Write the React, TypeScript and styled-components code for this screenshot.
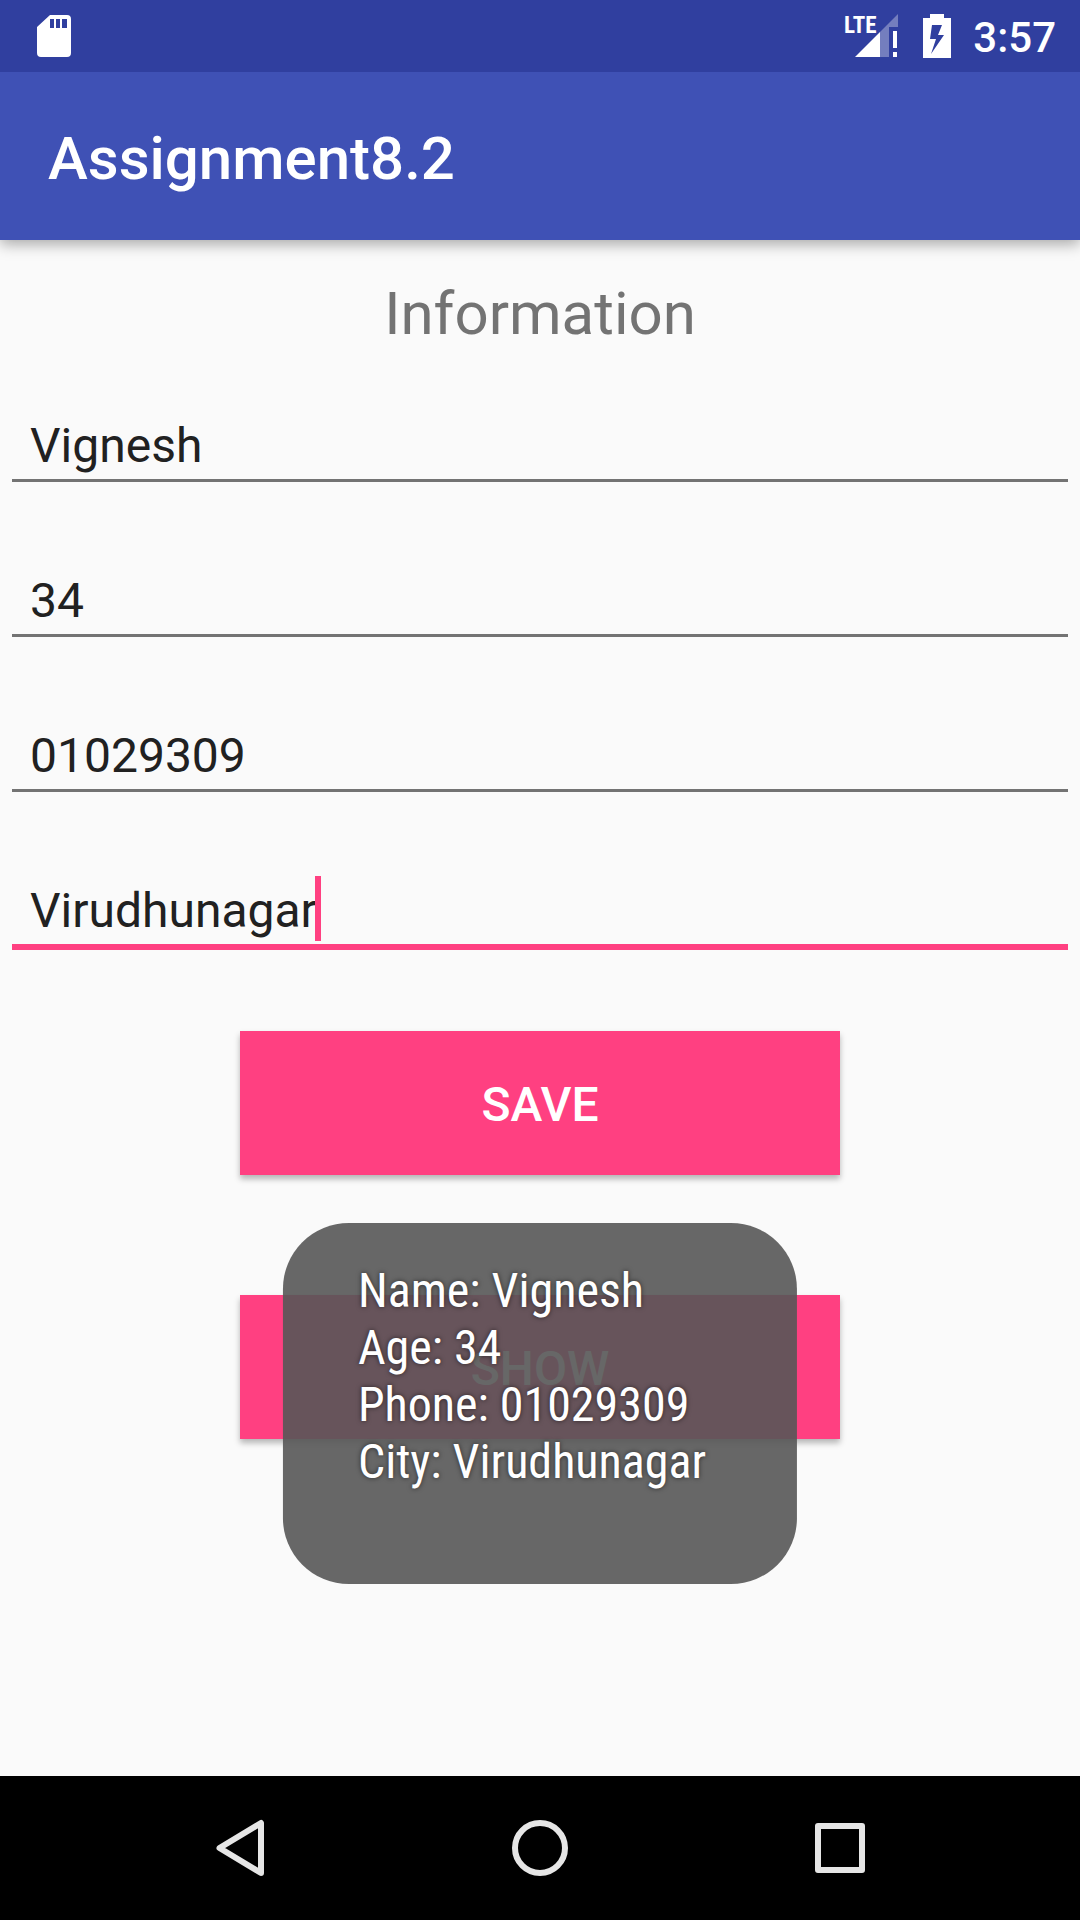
import React, { useState } from "react";
import styled, { createGlobalStyle } from "styled-components";

const GlobalStyle = createGlobalStyle`
  *, *::before, *::after { box-sizing: border-box; }
  body { margin: 0; background: #fafafa; font-family: Roboto, "Noto Sans", sans-serif; }
`;

const Screen = styled.div`
  display: flex;
  flex-direction: column;
  min-height: 100vh;
`;

const StatusBar = styled.div`
  position: relative;
  z-index: 1;
  display: flex;
  align-items: center;
  justify-content: space-between;
  height: 72px;
  padding: 0 24px 0 36px;
  background: #303f9f;
  color: #fff;
`;

const StatusGroup = styled.div`
  display: flex;
  align-items: center;
  gap: 22px;
`;

const Clock = styled.time`
  padding-top: 4px;
  font-size: 42px;
  line-height: 48px;
  font-weight: 500;
`;

const Glyph = styled.svg`
  display: block;
  flex: none;
  overflow: visible;
`;

const AppBar = styled.header`
  display: flex;
  align-items: center;
  height: 168px;
  padding: 6px 48px 0;
  background: #3f51b5;
  color: #fff;
  box-shadow: 0 4px 14px rgba(0, 0, 0, 0.34);
`;

const AppTitle = styled.h1`
  margin: 0;
  font-size: 60px;
  line-height: 72px;
  font-weight: 500;
`;

const Content = styled.main`
  position: relative;
  flex: 1;
`;

const Form = styled.form`
  display: flex;
  flex-direction: column;
  align-items: center;
  padding: 38px 12px;
`;

const Heading = styled.h2`
  margin: 0 0 37px;
  font-size: 60px;
  line-height: 72px;
  font-weight: 400;
  color: #737373;
`;

const Fields = styled.div`
  display: flex;
  flex-direction: column;
  align-self: stretch;
  gap: 60px;
`;

const Field = styled.label`
  position: relative;
  display: block;
  height: 95px;
`;

const Input = styled.input<{ $active: boolean }>`
  display: block;
  width: 100%;
  height: ${(p) => (p.$active ? 98 : 95)}px;
  padding: 33px 18px 9px;
  border: 0;
  border-bottom: ${(p) => (p.$active ? "6px solid #ff4081" : "3px solid #737373")};
  border-radius: 0;
  outline: 0;
  background: transparent;
  color: #212121;
  font: 400 48px/50px Roboto, "Noto Sans", sans-serif;
`;

const CaretTrack = styled.span`
  position: absolute;
  top: 24px;
  left: 16px;
  display: flex;
  height: 65px;
  font-size: 48px;
  pointer-events: none;
`;

const CaretSpacer = styled.span`
  visibility: hidden;
`;

const Caret = styled.span`
  width: 6px;
  background: #ff4081;
`;

const Actions = styled.div`
  display: flex;
  flex-direction: column;
  gap: 120px;
  width: 600px;
  max-width: 100%;
  margin-top: 84px;
`;

const ActionButton = styled.button`
  height: 144px;
  padding: 4px 24px 0;
  border: 0;
  background: #ff4081;
  color: #fff;
  font: 500 48px/56px Roboto, "Noto Sans", sans-serif;
  text-transform: uppercase;
  box-shadow: 0 4px 6px rgba(0, 0, 0, 0.28);
`;

const Toast = styled.div`
  position: absolute;
  bottom: 192px;
  left: 50%;
  transform: translateX(-50%);
  padding: 39px 91px 94px 75px;
  border-radius: 66px;
  background: rgba(87, 87, 87, 0.9);
  color: #fff;
  font-family: "Roboto Condensed", Roboto, sans-serif;
  font-size: 48px;
  line-height: 57px;
  white-space: nowrap;
  text-shadow: 0 0 5px rgba(0, 0, 0, 0.6);
`;

const ToastLine = styled.div``;

const NavBar = styled.nav`
  display: flex;
  justify-content: center;
  gap: 156px;
  height: 144px;
  background: #000;
`;

const NavButton = styled.button`
  display: flex;
  align-items: center;
  justify-content: center;
  width: 144px;
  height: 144px;
  padding: 0;
  border: 0;
  background: transparent;
`;

const initialFields = [
  { key: "Name", value: "Vignesh" },
  { key: "Age", value: "34" },
  { key: "Phone", value: "01029309" },
  { key: "City", value: "Virudhunagar" },
];

function SdCardIcon() {
  return (
    <Glyph width="36" height="44" viewBox="0 0 36 44" aria-hidden="true">
      <path
        fill="#fff"
        fillRule="evenodd"
        d="M14 1h17a4 4 0 0 1 4 4v34a4 4 0 0 1-4 4H5a4 4 0 0 1-4-4V13zM14 5v9h4V5zm6 0v9h4V5zm6 0v9h5V5z"
      />
    </Glyph>
  );
}

const LteLabel = styled.text`
  font: 700 23px "Roboto Condensed", Roboto, sans-serif;
`;

function SignalIcon() {
  return (
    <Glyph width="56" height="44" viewBox="0 0 56 44" fill="#fff">
      <path d="M53 0v13h-9v30h-9V18z" opacity="0.33" />
      <path d="M10 43 35 18v25z" />
      <path d="M48 17h4v17h-4zM48 38h4v5h-4z" />
      <LteLabel x="-1" y="19">LTE</LteLabel>
    </Glyph>
  );
}

function BatteryIcon() {
  return (
    <Glyph width="28" height="44" viewBox="0 0 28 44" aria-hidden="true">
      <path fill="#fff" fillRule="evenodd" d="M7 0h14v4h7v40H0V4h7zM9 11 7 25h6L8 40 21 21h-6l4-10z" />
    </Glyph>
  );
}

function BackIcon() {
  return (
    <Glyph width="60" height="60" viewBox="0 0 60 60" fill="none" stroke="#e6e6e6" strokeWidth="6" strokeLinejoin="round">
      <path d="M51 5v50L9.5 30z" />
    </Glyph>
  );
}

function HomeIcon() {
  return (
    <Glyph width="60" height="60" viewBox="0 0 60 60" fill="none" stroke="#e6e6e6" strokeWidth="6">
      <circle cx="30" cy="30" r="25" />
    </Glyph>
  );
}

function RecentsIcon() {
  return (
    <Glyph width="60" height="60" viewBox="0 0 60 60" fill="none" stroke="#e6e6e6" strokeWidth="6" strokeLinejoin="round">
      <rect x="8" y="8" width="44" height="44" />
    </Glyph>
  );
}

export default function App() {
  const [fields, setFields] = useState(initialFields);
  const [active, setActive] = useState("City");

  const update = (key: string, value: string) =>
    setFields((all) => all.map((f) => (f.key === key ? { ...f, value } : f)));

  return (
    <Screen>
      <GlobalStyle />
      <StatusBar>
        <SdCardIcon />
        <StatusGroup>
          <SignalIcon />
          <BatteryIcon />
          <Clock>3:57</Clock>
        </StatusGroup>
      </StatusBar>
      <AppBar>
        <AppTitle>Assignment8.2</AppTitle>
      </AppBar>
      <Content>
        <Form onSubmit={(e) => e.preventDefault()}>
          <Heading>Information</Heading>
          <Fields>
            {fields.map((f) => (
              <Field key={f.key}>
                <Input
                  aria-label={f.key}
                  value={f.value}
                  $active={f.key === active}
                  onFocus={() => setActive(f.key)}
                  onChange={(e) => update(f.key, e.target.value)}
                />
                {f.key === active && (
                  <CaretTrack aria-hidden="true">
                    <CaretSpacer>{f.value}</CaretSpacer>
                    <Caret />
                  </CaretTrack>
                )}
              </Field>
            ))}
          </Fields>
          <Actions>
            <ActionButton type="submit">Save</ActionButton>
            <ActionButton type="button">Show</ActionButton>
          </Actions>
        </Form>
        <Toast role="status">
          {fields.map((f) => (
            <ToastLine key={f.key}>
              {f.key}: {f.value}
            </ToastLine>
          ))}
        </Toast>
      </Content>
      <NavBar>
        <NavButton type="button" aria-label="Back"><BackIcon /></NavButton>
        <NavButton type="button" aria-label="Home"><HomeIcon /></NavButton>
        <NavButton type="button" aria-label="Recent apps"><RecentsIcon /></NavButton>
      </NavBar>
    </Screen>
  );
}
